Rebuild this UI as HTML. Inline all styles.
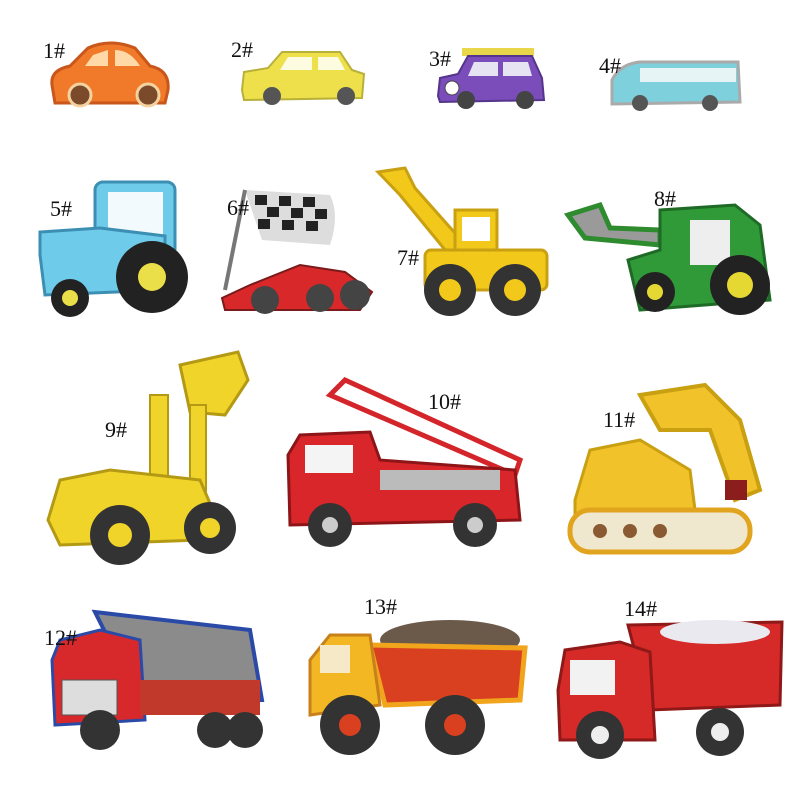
<!DOCTYPE html>
<html><head><meta charset="utf-8"><style>
html,body{margin:0;padding:0;background:#fff;width:800px;height:800px;overflow:hidden}
svg{display:block}
text{font-family:"Liberation Serif",serif;font-size:22px;fill:#111}
</style></head><body>
<svg width="800" height="800" viewBox="0 0 800 800" xmlns="http://www.w3.org/2000/svg">
<rect width="800" height="800" fill="#fff"/>
<!-- 1 orange car -->
<path d="M52 85 Q50 70 70 66 L88 48 Q110 38 135 48 L150 66 Q170 70 168 90 L165 103 L55 103 Z" fill="#f07a2a" stroke="#c9561a" stroke-width="3"/>
<path d="M93 55 L108 50 L108 66 L85 66 Z M115 50 Q130 50 140 66 L115 66 Z" fill="#ffd9a8"/>
<circle cx="80" cy="95" r="11" fill="#7a4a2a" stroke="#f3d2a0" stroke-width="3"/><circle cx="148" cy="95" r="11" fill="#7a4a2a" stroke="#f3d2a0" stroke-width="3"/>
<text x="43" y="58">1#</text>
<!-- 2 yellow car -->
<path d="M242 90 L244 72 L268 68 L282 52 L340 52 L352 70 L364 74 L362 98 L244 100 Z" fill="#ede04a" stroke="#b9b03a" stroke-width="2"/>
<path d="M288 57 L312 57 L312 70 L280 70 Z M318 57 L338 57 L345 70 L318 70 Z" fill="#fdfbe0"/>
<circle cx="272" cy="96" r="9" fill="#555"/><circle cx="346" cy="96" r="9" fill="#555"/>
<text x="231" y="57">2#</text>
<!-- 3 purple car -->
<rect x="462" y="48" width="72" height="8" fill="#e8d74a"/>
<path d="M438 96 L440 78 L458 74 L468 56 L532 56 L542 78 L544 100 L440 102 Z" fill="#7a4dbb" stroke="#55358b" stroke-width="2"/>
<path d="M474 62 L498 62 L498 76 L468 76 Z M503 62 L528 62 L532 76 L503 76 Z" fill="#e6e3f3"/>
<circle cx="466" cy="100" r="9" fill="#444"/><circle cx="525" cy="100" r="9" fill="#444"/>
<circle cx="452" cy="88" r="7" fill="#fff" stroke="#444"/>
<text x="429" y="66">3#</text>
<!-- 4 bus -->
<path d="M612 100 L612 80 Q620 64 640 62 L738 62 L740 102 L612 104 Z" fill="#7ed0dc" stroke="#aaa" stroke-width="3"/>
<rect x="640" y="68" width="96" height="14" fill="#e7f4f5"/>
<circle cx="640" cy="103" r="8" fill="#555"/><circle cx="710" cy="103" r="8" fill="#555"/>
<text x="599" y="73">4#</text>
<!-- 5 tractor -->
<rect x="95" y="182" width="80" height="75" rx="8" fill="#6ecbea" stroke="#3c8fb3" stroke-width="3"/>
<rect x="108" y="192" width="55" height="52" fill="#f2fafd"/>
<path d="M40 255 L40 232 L100 228 L165 236 L165 290 L45 295 Z" fill="#6ecbea" stroke="#3c8fb3" stroke-width="3"/>
<circle cx="152" cy="277" r="36" fill="#222"/><circle cx="152" cy="277" r="14" fill="#eadf48"/>
<circle cx="70" cy="298" r="19" fill="#222"/><circle cx="70" cy="298" r="8" fill="#eadf48"/>
<text x="50" y="216">5#</text>
<!-- 6 flag & race car -->
<path d="M245 190 L330 195 Q340 215 330 245 L262 240 Z" fill="#ddd"/>
<g fill="#222"><rect x="255" y="195" width="12" height="10"/><rect x="279" y="196" width="12" height="10"/><rect x="303" y="197" width="12" height="10"/><rect x="267" y="207" width="12" height="10"/><rect x="291" y="208" width="12" height="10"/><rect x="315" y="209" width="12" height="10"/><rect x="258" y="219" width="12" height="10"/><rect x="282" y="220" width="12" height="10"/><rect x="306" y="221" width="12" height="10"/></g>
<path d="M245 190 L225 290" stroke="#777" stroke-width="4"/>
<path d="M222 298 L250 285 L300 265 L345 272 L372 292 L360 310 L225 310 Z" fill="#d8282a" stroke="#7a1a1a" stroke-width="2"/>
<circle cx="265" cy="300" r="14" fill="#444"/><circle cx="355" cy="295" r="15" fill="#444"/><circle cx="320" cy="298" r="14" fill="#444"/>
<text x="227" y="215">6#</text>
<!-- 7 yellow loader -->
<path d="M378 172 L405 168 L415 188 L470 250 L455 262 L400 195 Z" fill="#f2c81a" stroke="#c8a011" stroke-width="3"/>
<rect x="455" y="210" width="42" height="42" fill="#f2c81a" stroke="#c8a011" stroke-width="3"/>
<rect x="462" y="217" width="28" height="24" fill="#fff"/>
<rect x="425" y="250" width="122" height="40" rx="6" fill="#f2c81a" stroke="#c8a011" stroke-width="3"/>
<circle cx="450" cy="290" r="26" fill="#333"/><circle cx="450" cy="290" r="11" fill="#f2c81a"/>
<circle cx="515" cy="290" r="26" fill="#333"/><circle cx="515" cy="290" r="11" fill="#f2c81a"/>
<text x="397" y="265">7#</text>
<!-- 8 green tractor -->
<path d="M568 215 L600 205 L610 228 L660 230 L660 245 L585 238 Z" fill="#9a9a9a" stroke="#2e8b2e" stroke-width="5"/>
<path d="M660 210 L735 205 L760 225 L770 300 L640 310 L628 260 L660 250 Z" fill="#2f9a37" stroke="#1f6a26" stroke-width="3"/>
<rect x="690" y="220" width="40" height="45" fill="#eee"/>
<circle cx="740" cy="285" r="30" fill="#222"/><circle cx="740" cy="285" r="13" fill="#e6d833"/>
<circle cx="655" cy="292" r="20" fill="#222"/><circle cx="655" cy="292" r="8" fill="#e6d833"/>
<text x="654" y="206">8#</text>
<!-- 9 yellow loader -->
<path d="M180 365 L238 352 L248 380 L225 415 L190 412 Z" fill="#f0d42a" stroke="#b49a14" stroke-width="3"/>
<rect x="150" y="395" width="18" height="100" fill="#f0d42a" stroke="#b49a14" stroke-width="2"/>
<rect x="190" y="405" width="16" height="90" fill="#f0d42a" stroke="#b49a14" stroke-width="2"/>
<path d="M48 520 L60 480 L110 470 L200 480 L215 515 L200 540 L60 545 Z" fill="#f0d42a" stroke="#b49a14" stroke-width="3"/>
<circle cx="120" cy="535" r="30" fill="#333"/><circle cx="120" cy="535" r="12" fill="#f0d42a"/>
<circle cx="210" cy="528" r="26" fill="#333"/><circle cx="210" cy="528" r="10" fill="#f0d42a"/>
<text x="105" y="437">9#</text>
<!-- 10 fire truck -->
<path d="M330 395 L345 380 L520 460 L515 475 Z" fill="#fff" stroke="#d4262a" stroke-width="5"/>
<path d="M288 455 L300 435 L370 432 L380 460 L515 470 L520 520 L290 525 Z" fill="#d9262a" stroke="#8d1518" stroke-width="3"/>
<rect x="305" y="445" width="48" height="28" fill="#f4f4f4"/>
<rect x="380" y="470" width="120" height="20" fill="#bbb"/>
<circle cx="330" cy="525" r="22" fill="#333"/><circle cx="330" cy="525" r="8" fill="#ccc"/>
<circle cx="475" cy="525" r="22" fill="#333"/><circle cx="475" cy="525" r="8" fill="#ccc"/>
<text x="428" y="409">10#</text>
<!-- 11 excavator -->
<path d="M640 395 L705 385 L740 420 L760 490 L735 500 L710 430 L660 430 Z" fill="#f2c22a" stroke="#c8a011" stroke-width="4"/>
<rect x="725" y="480" width="22" height="20" fill="#8b1d1d"/>
<path d="M575 500 L590 450 L640 440 L690 470 L695 510 L575 515 Z" fill="#f2c22a" stroke="#c8a011" stroke-width="3"/>
<rect x="570" y="510" width="180" height="42" rx="20" fill="#efe8cf" stroke="#e0a41e" stroke-width="5"/>
<g fill="#8a5a33"><circle cx="600" cy="531" r="7"/><circle cx="630" cy="531" r="7"/><circle cx="660" cy="531" r="7"/></g>
<text x="603" y="427">11#</text>
<!-- 12 truck -->
<path d="M95 612 L250 630 L262 700 L140 702 Z" fill="#8b8b8b" stroke="#2b4aa8" stroke-width="4"/>
<path d="M52 660 L60 640 L100 630 L140 640 L145 720 L55 725 Z" fill="#d7282c" stroke="#2b4aa8" stroke-width="3"/>
<rect x="62" y="680" width="55" height="35" fill="#ddd" stroke="#555"/>
<rect x="140" y="680" width="120" height="35" fill="#c0392b"/>
<circle cx="100" cy="730" r="20" fill="#333"/><circle cx="215" cy="730" r="18" fill="#333"/><circle cx="245" cy="730" r="18" fill="#333"/>
<text x="44" y="645">12#</text>
<!-- 13 orange dump truck -->
<ellipse cx="450" cy="640" rx="70" ry="20" fill="#6b5a4a"/>
<path d="M370 645 L525 648 L520 700 L385 705 Z" fill="#d94020" stroke="#f0a51d" stroke-width="5"/>
<path d="M310 660 L330 635 L370 635 L380 705 L310 715 Z" fill="#f2b722" stroke="#c8801a" stroke-width="3"/>
<rect x="320" y="645" width="30" height="28" fill="#f6e9c8"/>
<circle cx="350" cy="725" r="30" fill="#333"/><circle cx="350" cy="725" r="11" fill="#d94020"/>
<circle cx="455" cy="725" r="30" fill="#333"/><circle cx="455" cy="725" r="11" fill="#d94020"/>
<text x="364" y="614">13#</text>
<!-- 14 red dump truck -->
<path d="M628 625 L782 622 L780 705 L650 710 Z" fill="#d52a28" stroke="#8f1818" stroke-width="3"/>
<ellipse cx="715" cy="632" rx="55" ry="12" fill="#e9e9ef"/>
<path d="M558 690 L565 650 L620 642 L650 652 L655 740 L560 740 Z" fill="#d52a28" stroke="#8f1818" stroke-width="3"/>
<rect x="570" y="660" width="45" height="35" fill="#f2f2f2"/>
<circle cx="600" cy="735" r="24" fill="#333"/><circle cx="600" cy="735" r="9" fill="#eee"/>
<circle cx="720" cy="732" r="24" fill="#333"/><circle cx="720" cy="732" r="9" fill="#eee"/>
<text x="624" y="616">14#</text>
</svg>
</body></html>
